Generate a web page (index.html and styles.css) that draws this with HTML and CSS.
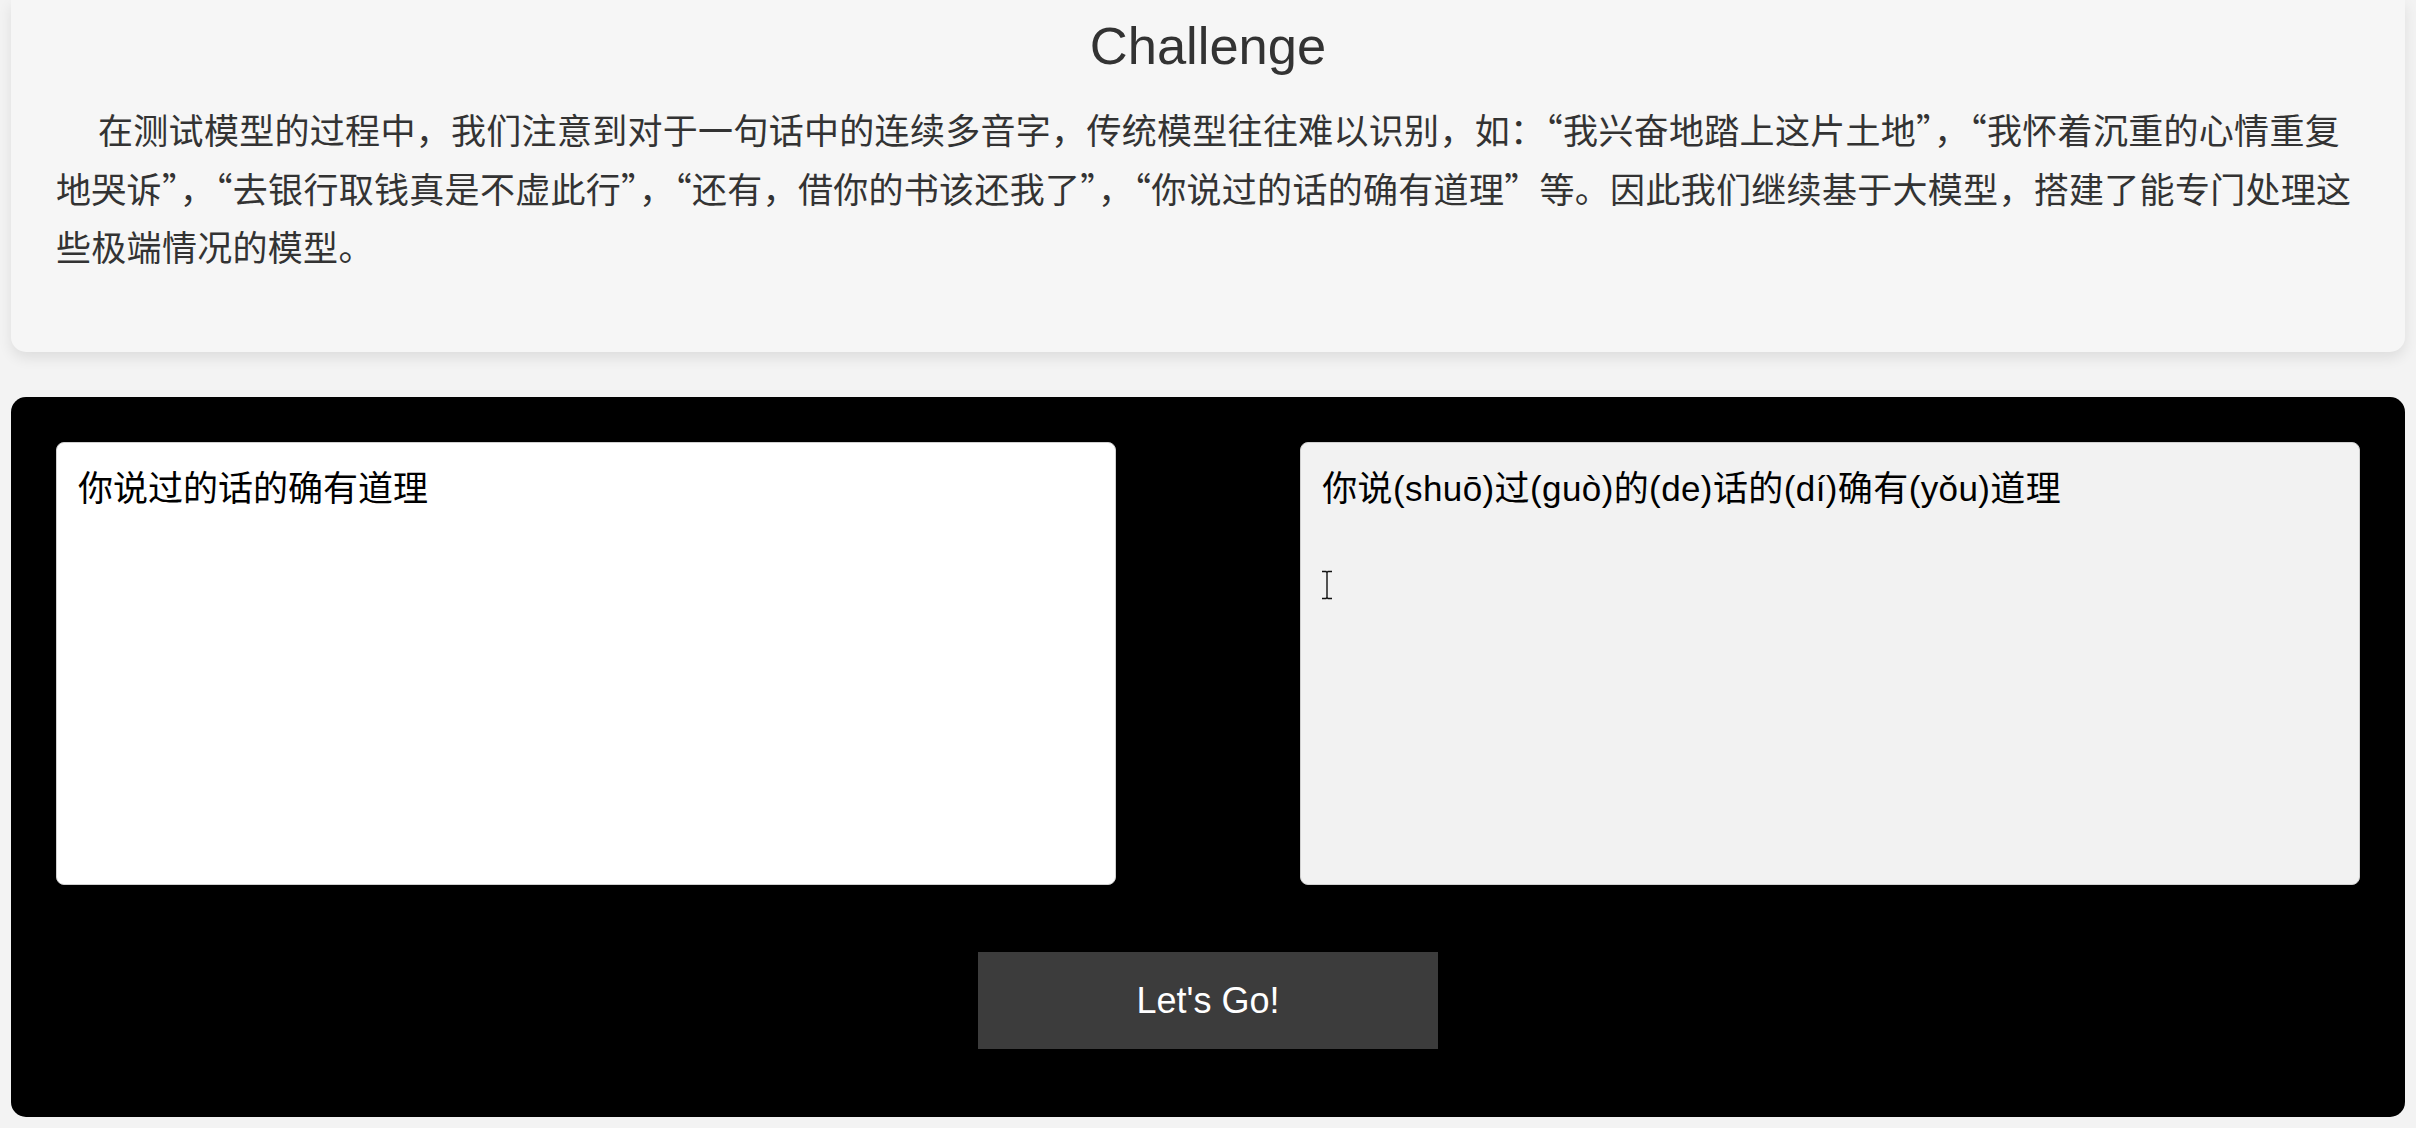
FILE: index.html
```html
<!DOCTYPE html>
<html lang="zh-CN">
<head>
<meta charset="utf-8">
<title>Challenge</title>
<link rel="stylesheet" href="styles.css">
</head>
<body>
<div class="page">
  <section class="intro-card">
    <h2 class="intro-title">Challenge</h2>
    <p class="intro-text">在测试模型的过程中，我们注意到对于一句话中的连续多音字，传统模型往往难以识别，如：“我兴奋地踏上这片土地”，“我怀着沉重的心情重复地哭诉”，“去银行取钱真是不虚此行”，“还有，借你的书该还我了”，“你说过的话的确有道理”等。因此我们继续基于大模型，搭建了能专门处理这些极端情况的模型。</p>
  </section>

  <section class="tool-panel">
    <div class="io-row">
      <textarea class="io-box io-input">你说过的话的确有道理</textarea>
      <div class="output-wrap">
        <textarea class="io-box io-output" readonly>你说(shuō)过(guò)的(de)话的(dí)确有(yǒu)道理</textarea>
        <svg class="ibeam" width="14" height="30" viewBox="0 0 14 30" aria-hidden="true">
          <path d="M2 1.5h4l1 1 1-1h4M7 2.5v25M2 28.5h4l1-1 1 1h4" fill="none" stroke="#111" stroke-width="1.4"/>
        </svg>
      </div>
    </div>
    <div class="action-row">
      <button class="go-btn" type="button">Let's Go!</button>
    </div>
  </section>
</div>
</body>
</html>
```

FILE: styles.css
```css
html, body {
  margin: 0;
  padding: 0;
  background: #f3f3f3;
}

.page {
  padding: 0 11px;
  display: flex;
  flex-direction: column;
  gap: 45px;
}

.intro-card {
  background: #f6f6f6;
  border-radius: 0 0 15px 15px;
  box-shadow: 0 6px 14px rgba(0, 0, 0, 0.09);
  padding: 15px 45px 45px;
}

.intro-title {
  margin: 0;
  text-align: center;
  font-family: "Liberation Sans", Arial, sans-serif;
  font-weight: normal;
  font-size: 52.5px;
  line-height: normal;
  color: #333;
}

.intro-text {
  margin: 24px 0 31.5px;
  font-family: "Noto Sans CJK SC", "Liberation Sans", sans-serif;
  font-size: 35px;
  letter-spacing: 0.3px;
  line-height: 58.5px;
  text-indent: 42px;
  color: #333;
}

.tool-panel {
  background: #000;
  border-radius: 15px;
  padding: 45px 45px 68px;
}

.io-row {
  display: flex;
  justify-content: space-between;
}

.io-box {
  box-sizing: border-box;
  width: 100%;
  height: 443px;
  margin: 0;
  border: 1px solid #d0d0d0;
  border-radius: 8px;
  padding: 20px 21px;
  resize: none;
  outline: none;
  font-family: "Liberation Sans", "Noto Sans CJK SC", sans-serif;
  font-size: 35px;
  line-height: 1.5;
  color: #000;
  display: block;
}

.io-input {
  width: 46%;
  background: #fff;
}

.output-wrap {
  width: 46%;
  position: relative;
}

.io-output {
  background: #f2f2f2;
  letter-spacing: 0.4px;
}

.ibeam {
  position: absolute;
  left: 20px;
  top: 128px;
}

.action-row {
  display: flex;
  justify-content: center;
  margin-top: 67px;
}

.go-btn {
  width: 460px;
  height: 97px;
  border: none;
  border-radius: 0;
  background: #3c3c3c;
  color: #fff;
  font-family: "Liberation Sans", Arial, sans-serif;
  font-size: 36px;
  cursor: pointer;
}
```
